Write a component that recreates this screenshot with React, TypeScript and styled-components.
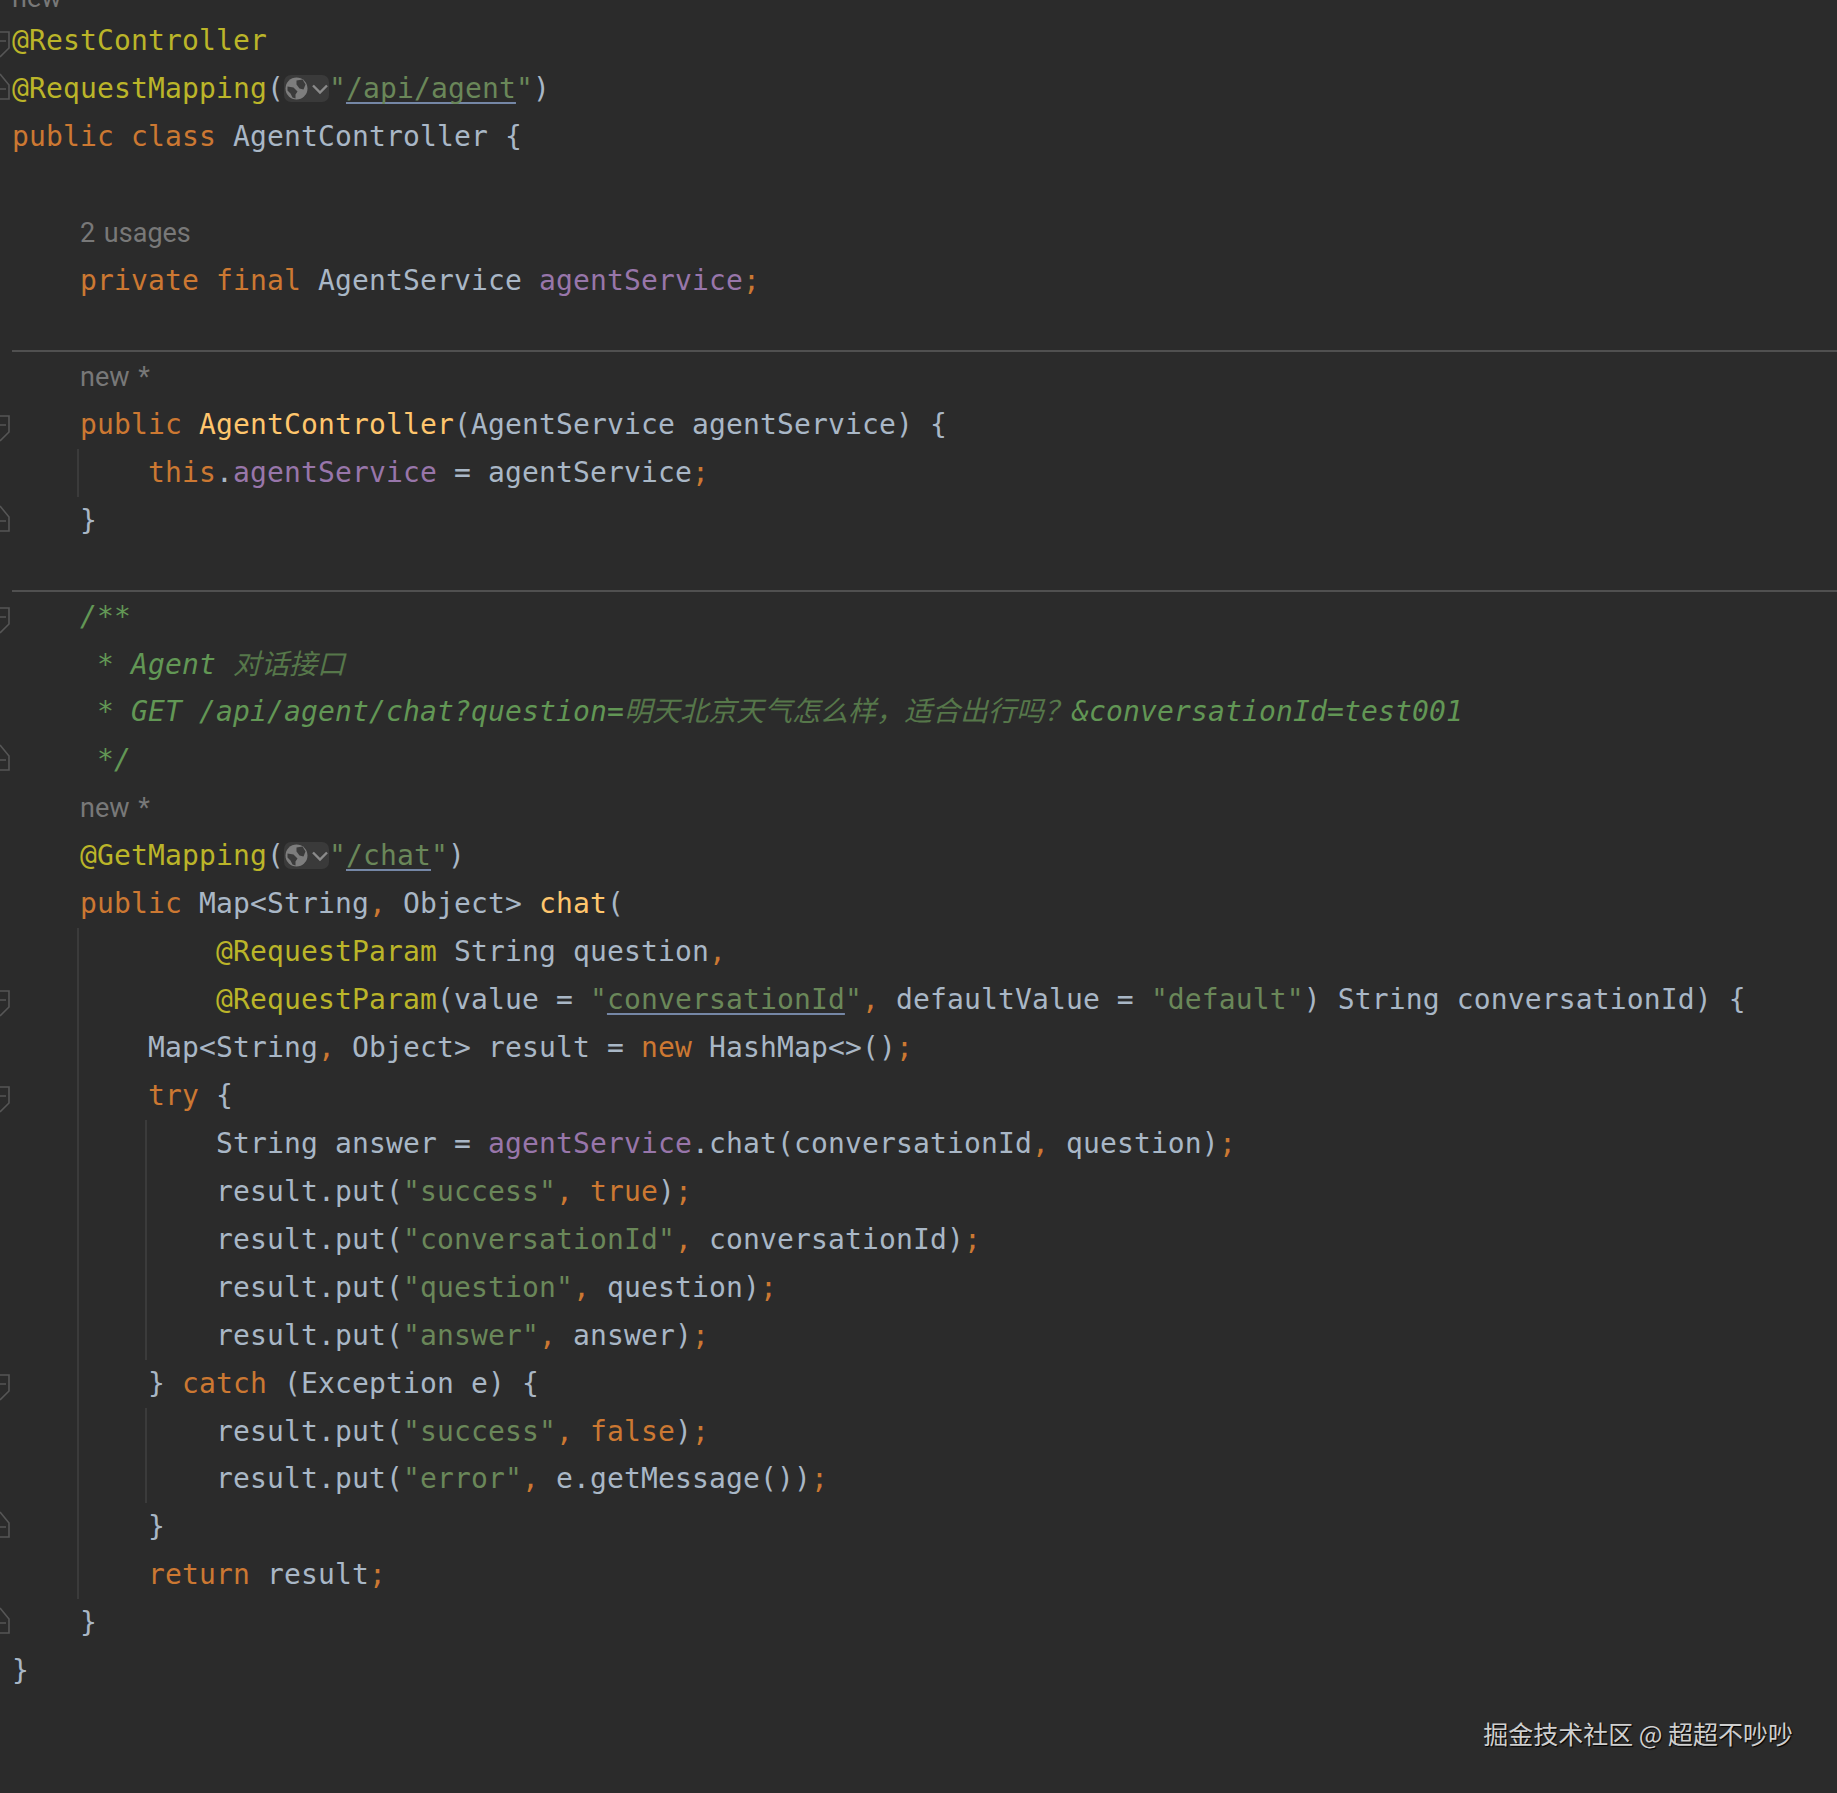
import { ReactNode } from "react";
import styled, { createGlobalStyle } from "styled-components";

const GlobalStyle = createGlobalStyle`
  html, body {
    margin: 0;
    background: #2b2b2b;
    overflow: hidden;
  }
`;

function FoldMark({ type }: { type: "start" | "end" }) {
  return (
    <FoldSvg viewBox="0 0 12 48">
      {type === "start" ? (
        <path d="M0 15H9V31L0 40M0 24H6" />
      ) : (
        <path d="M0 9L9 20V34H0M0 24H6" />
      )}
    </FoldSvg>
  );
}

function GlobeChip() {
  return (
    <Chip>
      <svg width="45" height="27" viewBox="0 0 45 27">
        <circle cx="12.5" cy="13.5" r="11" fill="#7d7d7d" />
        <path d="M12.5 5.5l6-1 3 5-2 5-4-1-3-4zM3.5 11.5l6 1 4 4-2 3 0 4-3-1-2-4-3-3z" fill="#3b3b3b" />
        <path d="M29 10.5l7 7 7-7" fill="none" stroke="#8a8a8a" strokeWidth="2.4" />
      </svg>
    </Chip>
  );
}

type LineProps = {
  children?: ReactNode;
  fold?: "start" | "end";
  guides?: number[];
  sep?: boolean;
};

function Line({ children, fold, guides = [], sep }: LineProps) {
  return (
    <Row $guides={guides} $sep={sep}>
      <Gutter>{fold && <FoldMark type={fold} />}</Gutter>
      <Code>{children}</Code>
    </Row>
  );
}

export default function App() {
  return (
    <Editor>
      <GlobalStyle />
      <TopCrop>
        <Gutter />
        <Hint>new *</Hint>
      </TopCrop>
      <Line fold="start"><Ann>@RestController</Ann></Line>
      <Line fold="end">
        <Ann>@RequestMapping</Ann>(<GlobeChip /><Str>"<Link>/api/agent</Link>"</Str>)
      </Line>
      <Line><Kw>public class</Kw> AgentController {"{"}</Line>
      <Line />
      <Line><Hint $indent>2 usages</Hint></Line>
      <Line>{"    "}<Kw>private final</Kw> AgentService <Fld>agentService</Fld><Kw>;</Kw></Line>
      <Line sep />
      <Line><Hint $indent>new *</Hint></Line>
      <Line fold="start">
        {"    "}<Kw>public</Kw> <Fn>AgentController</Fn>(AgentService agentService) {"{"}
      </Line>
      <Line guides={[77]}>
        {"        "}<Kw>this</Kw>.<Fld>agentService</Fld> = agentService<Kw>;</Kw>
      </Line>
      <Line fold="end">{"    }"}</Line>
      <Line sep />
      <Line fold="start"><Doc>{"    /**"}</Doc></Line>
      <Line><Doc>{"     * Agent "}<Zh>对话接口</Zh></Doc></Line>
      <Line>
        <Doc>
          {"     * GET /api/agent/chat?question="}
          <Zh>明天北京天气怎么样，适合出行吗？</Zh>
          {"&conversationId=test001"}
        </Doc>
      </Line>
      <Line fold="end"><Doc>{"     */"}</Doc></Line>
      <Line><Hint $indent>new *</Hint></Line>
      <Line>
        {"    "}<Ann>@GetMapping</Ann>(<GlobeChip /><Str>"<Link>/chat</Link>"</Str>)
      </Line>
      <Line>
        {"    "}<Kw>public</Kw> Map&lt;String<Kw>,</Kw> Object&gt; <Fn>chat</Fn>(
      </Line>
      <Line guides={[77]}>
        {"            "}<Ann>@RequestParam</Ann> String question<Kw>,</Kw>
      </Line>
      <Line fold="start" guides={[77]}>
        {"            "}<Ann>@RequestParam</Ann>(value = <Str>"<Link>conversationId</Link>"</Str><Kw>,</Kw> defaultValue = <Str>"default"</Str>) String conversationId) {"{"}
      </Line>
      <Line guides={[77]}>
        {"        "}Map&lt;String<Kw>,</Kw> Object&gt; result = <Kw>new</Kw> HashMap&lt;&gt;()<Kw>;</Kw>
      </Line>
      <Line fold="start" guides={[77]}>{"        "}<Kw>try</Kw> {"{"}</Line>
      <Line guides={[77, 145]}>
        {"            "}String answer = <Fld>agentService</Fld>.chat(conversationId<Kw>,</Kw> question)<Kw>;</Kw>
      </Line>
      <Line guides={[77, 145]}>
        {"            "}result.put(<Str>"success"</Str><Kw>,</Kw> <Kw>true</Kw>)<Kw>;</Kw>
      </Line>
      <Line guides={[77, 145]}>
        {"            "}result.put(<Str>"conversationId"</Str><Kw>,</Kw> conversationId)<Kw>;</Kw>
      </Line>
      <Line guides={[77, 145]}>
        {"            "}result.put(<Str>"question"</Str><Kw>,</Kw> question)<Kw>;</Kw>
      </Line>
      <Line guides={[77, 145]}>
        {"            "}result.put(<Str>"answer"</Str><Kw>,</Kw> answer)<Kw>;</Kw>
      </Line>
      <Line fold="start" guides={[77]}>
        {"        } "}<Kw>catch</Kw> (Exception e) {"{"}
      </Line>
      <Line guides={[77, 145]}>
        {"            "}result.put(<Str>"success"</Str><Kw>,</Kw> <Kw>false</Kw>)<Kw>;</Kw>
      </Line>
      <Line guides={[77, 145]}>
        {"            "}result.put(<Str>"error"</Str><Kw>,</Kw> e.getMessage())<Kw>;</Kw>
      </Line>
      <Line fold="end" guides={[77]}>{"        }"}</Line>
      <Line guides={[77]}>{"        "}<Kw>return</Kw> result<Kw>;</Kw></Line>
      <Line fold="end">{"    }"}</Line>
      <Line>{"}"}</Line>
      <Watermark>掘金技术社区 @ 超超不吵吵</Watermark>
    </Editor>
  );
}

const Editor = styled.div`
  display: flex;
  flex-direction: column;
  height: 1793px;
  overflow: hidden;
  background: #2b2b2b;
  color: #a9b7c6;
  font-family: "DejaVu Sans Mono", "Liberation Mono", monospace;
  font-size: 28px;
  letter-spacing: 0.14px;
`;

const TopCrop = styled.div`
  display: flex;
  align-items: flex-end;
  flex: none;
  height: 17.4px;
  overflow: hidden;
  line-height: 38px;
`;

const Row = styled.div<{ $guides: number[]; $sep?: boolean }>`
  display: flex;
  align-items: center;
  flex: none;
  box-sizing: border-box;
  height: 47.94px;
  line-height: 48px;
  background-image: ${(p) =>
    p.$sep
      ? "linear-gradient(#505050, #505050)"
      : p.$guides.length
        ? p.$guides.map(() => "linear-gradient(#3b3b3b, #3b3b3b)").join(", ")
        : "none"};
  background-position: ${(p) =>
    p.$sep ? "12px calc(100% - 1px)" : p.$guides.map((x) => `${x}px 0`).join(", ") || "0 0"};
  background-size: ${(p) => (p.$sep ? "100% 2px" : "2px 100%")};
  background-repeat: no-repeat;
`;

const Gutter = styled.div`
  flex: none;
  width: 12px;
  height: 48px;
`;

const FoldSvg = styled.svg`
  display: block;
  width: 12px;
  height: 48px;
  fill: none;
  stroke: #565656;
  stroke-width: 1.6;
`;

const Code = styled.div`
  white-space: pre;
`;

const Kw = styled.span`
  color: #cc7832;
`;

const Ann = styled.span`
  color: #bbb529;
`;

const Str = styled.span`
  color: #6a8759;
`;

const Fld = styled.span`
  color: #9876aa;
`;

const Fn = styled.span`
  color: #ffc66d;
`;

const Doc = styled.span`
  color: #629755;
  font-style: italic;
`;

const Zh = styled.span`
  font-family: "Noto Sans CJK SC", sans-serif;
  font-size: 28px;
  line-height: 0;
  letter-spacing: 0;
  color: #56774a;
`;

const Link = styled.span`
  text-decoration: underline;
  text-decoration-color: #7587a6;
  text-decoration-thickness: 2px;
  text-decoration-skip-ink: none;
  text-underline-offset: 4px;
`;

const Hint = styled.span<{ $indent?: boolean }>`
  margin-left: ${(p) => (p.$indent ? 68 : 0)}px;
  font-family: Roboto, "Noto Sans", sans-serif;
  font-size: 27px;
  word-spacing: 2px;
  letter-spacing: 0;
  color: #787878;
`;

const Chip = styled.span`
  display: inline-block;
  width: 45px;
  height: 27px;
  vertical-align: -4px;
  border-radius: 7px;
  background: #3a3a3a;

  svg {
    display: block;
  }
`;

const Watermark = styled.div`
  flex: none;
  margin-top: 21px;
  padding-right: 44px;
  text-align: right;
  font-family: "Noto Sans CJK SC", sans-serif;
  font-size: 25px;
  letter-spacing: 0;
  line-height: 34px;
  color: #cfcfcf;
  text-shadow: 1px 1px 1px #000;
`;
